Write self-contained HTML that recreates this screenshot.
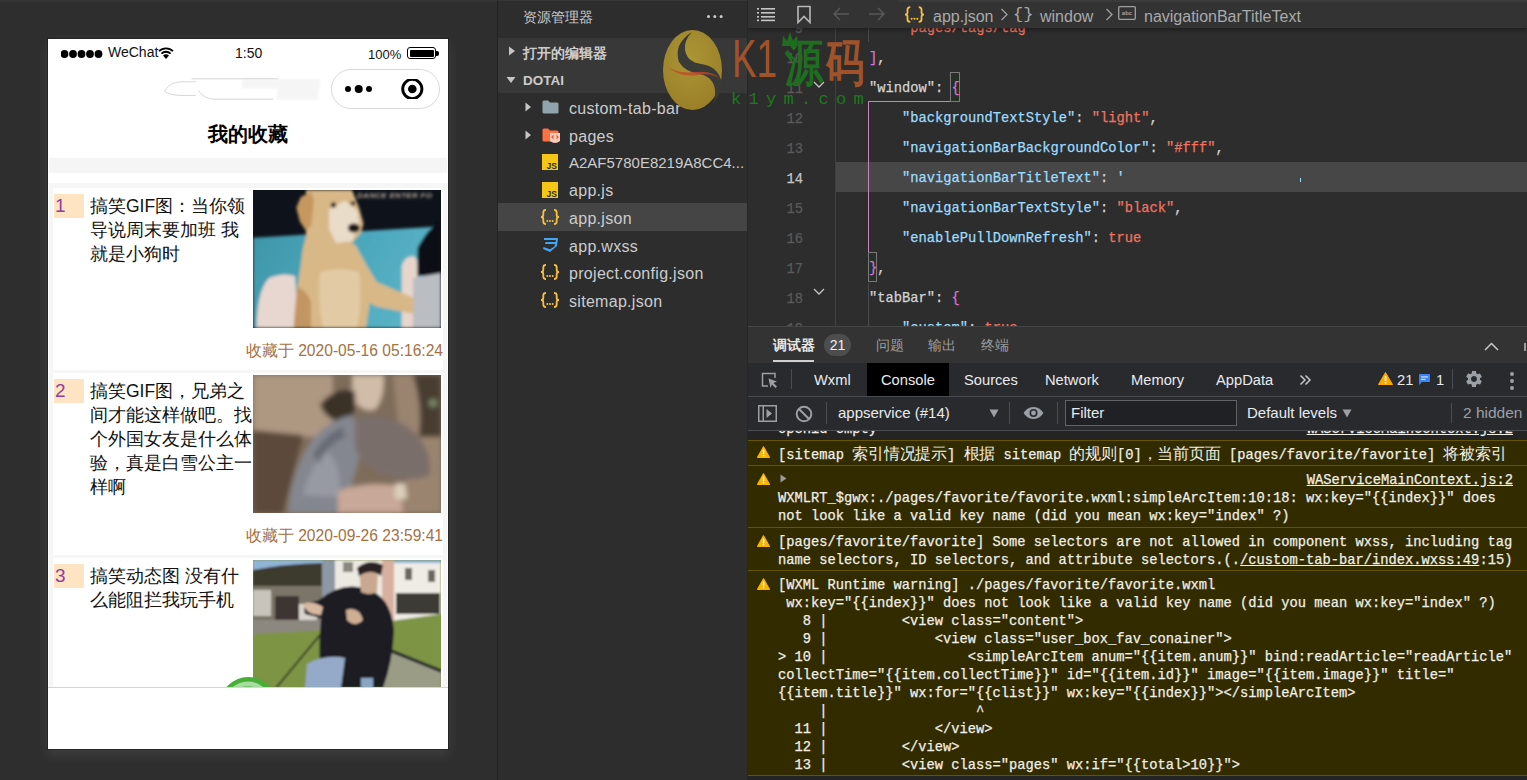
<!DOCTYPE html>
<html><head><meta charset="utf-8">
<style>
*{margin:0;padding:0;box-sizing:border-box}
html,body{width:1527px;height:780px;overflow:hidden;background:#2e2e2e;font-family:"Liberation Sans",sans-serif}
.a{position:absolute}
.nw{white-space:nowrap}
.pre{white-space:pre}
/* simulator */
#sim{left:0;top:0;width:497px;height:780px;background:#2e2e2e}
#phone{left:48px;top:39px;width:400px;height:710px;background:#fff;overflow:hidden;box-shadow:0 0 0 1px rgba(20,20,20,.5),0 5px 12px 1px rgba(255,255,255,.085)}
/* sidebar */
#side{left:497px;top:0;width:251px;height:780px;background:#2d2d2d;border-left:1px solid #222}
/* editor */
#ed{left:748px;top:0;width:779px;height:326px;background:#2d2d2d;overflow:hidden}
#panel{left:748px;top:326px;width:779px;height:454px;background:#242424}
.bm{}
.ct{font-size:13.75px;line-height:18px;color:#efefe8;-webkit-text-stroke-width:0.3px}
.cj{font-size:16px;letter-spacing:-0.2px;-webkit-text-stroke-width:0}
.mono{-webkit-text-stroke-width:0.25px;font-family:"Liberation Mono",monospace}
</style></head><body>
<div id="sim" class="a">
  <div class="a" style="left:0;top:0;width:497px;height:2px;background:#353535"></div>
</div>
<div id="phone" class="a">
  <!-- status bar -->
  <svg class="a" style="left:12px;top:10px" width="48" height="10" viewBox="0 0 48 10">
    <circle cx="4.5" cy="5" r="3.9" fill="#000"/><circle cx="13" cy="5" r="3.9" fill="#000"/><circle cx="21.5" cy="5" r="3.9" fill="#000"/><circle cx="30" cy="5" r="3.9" fill="#000"/><circle cx="38.5" cy="5" r="3.9" fill="#000"/>
    <rect x="0" y="0" width="1" height="10" fill="#fff"/>
  </svg>
  <div class="a nw" id="wechat" style="left:60px;top:6px;font-size:14px;line-height:14px;color:#111">WeChat</div>
  <svg class="a" style="left:110px;top:8px" width="16" height="12" viewBox="0 0 16 12">
    <path d="M1 4.2 A10 10 0 0 1 15 4.2" stroke="#000" stroke-width="1.8" fill="none"/>
    <path d="M3.4 6.6 A6.6 6.6 0 0 1 12.6 6.6" stroke="#000" stroke-width="1.8" fill="none"/>
    <path d="M8 12 L5 8.6 A4.2 4.2 0 0 1 11 8.6 Z" fill="#000"/>
  </svg>
  <div class="a nw" id="time" style="left:187px;top:7px;font-size:14px;line-height:14px;color:#111">1:50</div>
  <div class="a nw" id="pct" style="left:320px;top:9px;font-size:13px;line-height:13px;color:#111">100%</div>
  <div class="a" style="left:359px;top:8px;width:29px;height:12px;border:1.3px solid #000;border-radius:3px;padding:1.5px">
    <div style="width:100%;height:100%;background:#000;border-radius:1px"></div>
  </div>
  <div class="a" style="left:388px;top:12px;width:3px;height:5px;background:#000;border-radius:0 2px 2px 0"></div>
  <!-- erased title smudge -->
  <svg class="a" style="left:110px;top:36px" width="170" height="30" viewBox="0 0 170 30">
    <defs><filter id="sb"><feGaussianBlur stdDeviation="0.8"/></filter></defs>
    <g filter="url(#sb)">
    <rect x="84" y="4" width="78" height="9.5" fill="#f5f5f5"/>
    <rect x="119" y="12" width="41" height="13" fill="#f5f5f5"/>
    </g>
    <path d="M6.4 16.2 Q12 6.8 23 6.8 L38 6.8 M6.4 16.2 Q12 20.4 23 20.4 L38 20.4" fill="none" stroke="#d6d6d6" stroke-width="1"/>
    <path d="M33.6 3.8 L120 3.8 M40.6 15.6 Q46 24.2 57 24.2 L115 24.2" fill="none" stroke="#d6d6d6" stroke-width="1"/>
  </svg>
  <!-- capsule -->
  <div class="a" style="left:283px;top:30px;width:109px;height:40px;border:1px solid #d9d9d9;border-radius:20px;background:#fff"></div>
  <svg class="a" style="left:290px;top:40px" width="100" height="20" viewBox="0 0 100 20">
    <circle cx="10" cy="10" r="3" fill="#000"/><circle cx="20.7" cy="10" r="4" fill="#000"/><circle cx="31" cy="10" r="3" fill="#000"/>
    <circle cx="74.3" cy="10" r="9.6" fill="none" stroke="#000" stroke-width="2.9"/><circle cx="74.3" cy="10" r="4.3" fill="#000"/>
  </svg>
  <div class="a nw" id="title" style="left:0;top:85px;width:400px;text-align:center;font-size:20px;line-height:20px;font-weight:bold;color:#000">我的收藏</div>
  <!-- gray band -->
  <div class="a" style="left:1px;top:119px;width:398px;height:15px;background:#f5f5f5"></div>
  <!-- list -->
  <div class="a" style="left:1px;top:144px;width:398px;height:504px;background:#f6f6f6"></div>
  
  <div class="a" style="left:5px;top:149px;width:390px;height:182px;background:#fff;overflow:hidden">
    <div class="a" style="left:1px;top:6px;width:30px;height:24px;background:#ffe4c4;color:#923c9e;font-size:19px;line-height:24px;padding-left:1px">1</div>
    <div class="a" style="left:37px;top:6px;width:162.2px;font-size:17.5px;line-height:24px;color:#111">搞笑GIF图：当你领导说周末要加班 我就是小狗时</div>
    <div class="a" style="left:200px;top:2px;width:188px;height:138px;overflow:hidden"><svg width="188" height="138" viewBox="0 0 188 138">
<defs><filter id="b1" x="-5%" y="-5%" width="110%" height="110%"><feGaussianBlur stdDeviation="1.7"/></filter>
<linearGradient id="tl" x1="0" y1="0" x2="1" y2="0.3"><stop offset="0" stop-color="#3f95a8"/><stop offset="0.6" stop-color="#4ca8bc"/><stop offset="1" stop-color="#5ab2c6"/></linearGradient></defs>
<rect width="188" height="138" fill="#0e121a"/>
<g filter="url(#b1)">
<path d="M0 47.8 L177 37 L188 36 L188 138 L0 138 Z" fill="url(#tl)"/>
<text x="104" y="8" font-family="Liberation Sans" font-size="8" font-weight="bold" fill="#b8ac9c" font-style="italic" letter-spacing="0.3">DANCE  ENTER    FO</text>
<path d="M3.5 138 Q4 100 16 88 Q30 82 42 86 L46 138Z" fill="#e8d6d0"/>
<path d="M148.6 138 L148.6 76 Q152 66 160 66 Q164.5 68 164.5 76 L164.5 138Z" fill="#e8d5cc"/>
<path d="M164.5 58 Q176 36 188 32 L188 85 L164.5 86Z" fill="#090c14"/>
<path d="M160 88 L188 83 L188 138 L160 138Z" fill="#babdc2"/>
<path d="M53 0 L99 0 L106 17.7 L110.5 33.6 L108 42.4 L99 53 Q104 56 104.4 58.4 L113 74.3 L123.8 92 L161 108 L160 123.8 L123.8 116.7 L116.7 113 L113 138 L40.7 138 L41.6 123.8 L44.2 99 L47.8 74.3 L49.5 60 L53 46Z" fill="#d8b887"/>
<path d="M43.3 17.7 L47.8 7.1 L58.4 1.8 L61 10.6 L58.4 35.4 L53 40.7 L46.9 31.8Z" fill="#c69860"/>
<path d="M76 19.5 L92 10.6 L104.4 21 L106 33.6 L99 51.3 L83 53 L76 39Z" fill="#e9dcc8"/>
<path d="M67 82 Q88 76 106 82 Q110 112 104 138 L70 138 Q64 110 67 82Z" fill="#e2caa4"/>
<path d="M40.7 138 L44 97 Q54 100 58 112 L58 138Z" fill="#c29662"/>
<ellipse cx="100.8" cy="38" rx="6" ry="4.5" fill="#1a1512"/>
<circle cx="80.5" cy="15" r="2.7" fill="#2a2018"/><circle cx="100" cy="13.3" r="2.4" fill="#2a2018"/>
</g>
</svg></div>
    <div class="a nw" style="right:0;top:155px;font-size:15.6px;line-height:16px;color:#a5713f">收藏于 2020-05-16 05:16:24</div>
  </div>
  <div class="a" style="left:5px;top:334px;width:390px;height:182px;background:#fff;overflow:hidden">
    <div class="a" style="left:1px;top:6px;width:30px;height:24px;background:#ffe4c4;color:#923c9e;font-size:19px;line-height:24px;padding-left:1px">2</div>
    <div class="a" style="left:37px;top:6px;width:162.2px;font-size:17.5px;line-height:24px;color:#111">搞笑GIF图，兄弟之间才能这样做吧。找个外国女友是什么体验，真是白雪公主一样啊</div>
    <div class="a" style="left:200px;top:2px;width:188px;height:138px;overflow:hidden"><svg width="188" height="138" viewBox="0 0 188 138">
<defs><filter id="b3" x="-5%" y="-5%" width="110%" height="110%"><feGaussianBlur stdDeviation="2.8"/></filter></defs>
<rect width="188" height="138" fill="#7e6c5a"/>
<g filter="url(#b3)">
<rect x="0" y="0" width="80" height="62" fill="#ae9882"/>
<path d="M0 55 L50 60 Q40 100 30 138 L0 138Z" fill="#5c4a3a"/>
<path d="M140 0 L188 0 L188 138 L150 138 Q158 90 145 50Z" fill="#9a8470"/>
<path d="M160 0 L188 0 L188 62 L166 62 Q170 30 160 0Z" fill="#4a3e32"/>
<circle cx="180" cy="28" r="4" fill="#7a8a68"/>
<path d="M99 0 L131 0 Q132 25 122 35 Q105 38 99 20Z" fill="#d0bca8"/>
<path d="M67 30 Q80 12 102 16 Q104 36 96 46 Q76 50 67 30Z" fill="#3a3028"/>
<path d="M35 138 Q38 96 58 66 Q76 44 99 40 Q112 60 104 92 Q96 120 92 138Z" fill="#84878f"/>
<path d="M50 120 Q56 92 74 76 Q90 92 86 122Z" fill="#979aa2"/>
<path d="M60 80 Q70 60 90 52 L92 62 Q74 70 66 88Z" fill="#686c76"/>
<path d="M102 42 Q132 36 158 54 Q180 74 177 100 Q160 108 130 100 Q106 90 102 70Z" fill="#7a6e6a"/>
<path d="M85 116 Q118 104 150 112 L150 138 L85 138Z" fill="#c8a898"/>
<path d="M142 108 L152 108 L154 124 L142 124Z" fill="#dcd0bc"/>
</g>
</svg></div>
    <div class="a nw" style="right:0;top:155px;font-size:15.6px;line-height:16px;color:#a5713f">收藏于 2020-09-26 23:59:41</div>
  </div>
  <div class="a" style="left:5px;top:519px;width:390px;height:140px;background:#fff;overflow:hidden">
    <div class="a" style="left:1px;top:6px;width:30px;height:24px;background:#ffe4c4;color:#923c9e;font-size:19px;line-height:24px;padding-left:1px">3</div>
    <div class="a" style="left:37px;top:6px;width:162.2px;font-size:17.5px;line-height:24px;color:#111">搞笑动态图 没有什么能阻拦我玩手机</div>
    <div class="a" style="left:200px;top:2px;width:188px;height:138px;overflow:hidden"><svg width="188" height="138" viewBox="0 0 188 138">
<defs><filter id="b4" x="-5%" y="-5%" width="110%" height="110%"><feGaussianBlur stdDeviation="1.2"/></filter></defs>
<rect width="188" height="138" fill="#7e9446"/>
<g filter="url(#b4)">
<rect x="0" y="0" width="188" height="12" fill="#90b4d8"/>
<path d="M0 10 Q30 4 70 3 L70 32 L0 32Z" fill="#3c3a2e"/>
<rect x="0" y="26" width="70" height="36" fill="#7a7468"/>
<rect x="0" y="30" width="18" height="26" fill="#c8c4bc"/>
<rect x="22" y="36" width="24" height="26" fill="#3c3632"/>
<rect x="46" y="44" width="18" height="16" fill="#d8d4cc"/>
<rect x="69" y="0" width="14" height="44" fill="#8c98a4"/>
<rect x="82" y="0" width="48" height="42" fill="#ece8e2"/>
<rect x="90" y="2" width="10" height="10" fill="#8a8680"/>
<rect x="129" y="0" width="12" height="62" fill="#d8b0a0"/>
<rect x="141" y="3" width="47" height="61" fill="#efebe5"/>
<rect x="143" y="33" width="44" height="21" fill="#3e3a36"/>
<rect x="152" y="8" width="7" height="12" fill="#6a6660"/><rect x="175" y="10" width="7" height="12" fill="#6a6660"/>
<rect x="0" y="60" width="70" height="14" fill="#8c8880"/>
<path d="M0 74 L70 70 L131 62 L188 54 L188 138 L0 138Z" fill="#7d9444"/>
<path d="M23 128 L67 75" stroke="#2e2a22" stroke-width="1.8"/>
<path d="M131 88 L188 111 L188 138 L125 138Z" fill="#9a9c86"/>
<path d="M131 88 L188 111" stroke="#22222a" stroke-width="3"/>
<path d="M66 40 Q88 22 110 28 Q138 34 141 70 Q140 100 130 128 L70 128 Q64 96 68 58 L52 54 Q49 46 56 43Z" fill="#1a1a20"/>
<path d="M50 44 Q58 40 70 47 L68 55 Q54 56 50 44Z" fill="#d8b8a0"/>
<path d="M93 50 Q106 46 110 60 Q102 68 94 60Z" fill="#cfae94"/>
<path d="M106 10 Q116 3 125 10 L124 32 Q116 36 108 32Z" fill="#c8a890"/>
<path d="M104 8 Q116 -2 130 5 L128 16 Q118 8 106 16Z" fill="#2a2420"/>
<path d="M54 104 Q72 94 92 98 L88 128 L52 128Z" fill="#94aac8"/>
<rect x="108" y="118" width="12" height="10" fill="#8aa4c4"/>
</g>
</svg></div>
    <div class="a nw" style="right:0;top:155px;font-size:15.6px;line-height:16px;color:#a5713f"></div>
  </div>
  <!-- tabbar -->
  <div class="a" style="left:0;top:648px;width:400px;height:62px;background:#fff;border-top:1px solid #d6d6d6"></div>
  <svg class="a" style="left:170px;top:630px" width="60" height="18" viewBox="0 0 60 18">
    <circle cx="30" cy="36" r="28" fill="#45b035"/>
    <circle cx="30" cy="36" r="23.5" fill="#a8dba0"/>
    <circle cx="30" cy="36" r="19" fill="#6cc561"/>
  </svg>
</div>
<div id="side" class="a">
  <div class="a" style="left:0;top:0;width:250px;height:1px;background:#363636"></div>
  <div class="a nw" style="left:25px;top:10px;font-size:14px;line-height:14px;color:#cccccc">资源管理器</div>
  <div class="a" style="left:209px;top:15px;width:3px;height:3px;border-radius:50%;background:#ccc;box-shadow:6.3px 0 0 #ccc,12.6px 0 0 #ccc"></div>
  <div class="a" style="left:0;top:38px;width:250px;height:55px;background:#383838"></div>
  <svg class="a" style="left:10px;top:46px" width="8" height="10" viewBox="0 0 8 10"><path d="M1 0.5 L7 5 L1 9.5Z" fill="#c5c5c5"/></svg>
  <div class="a nw" style="left:25px;top:47px;font-size:13.5px;line-height:14px;font-weight:bold;color:#cccccc">打开的编辑器</div>
  <svg class="a" style="left:8px;top:76px" width="10" height="8" viewBox="0 0 10 8"><path d="M0.5 1 L9.5 1 L5 7Z" fill="#c5c5c5"/></svg>
  <div class="a nw" style="left:25px;top:74px;font-size:13.5px;line-height:14px;font-weight:bold;color:#cccccc">DOTAI</div>
  <div class="a" style="left:0;top:203px;width:250px;height:28px;background:#454545"></div>
  <svg class="a" style="left:27px;top:102px" width="7" height="10" viewBox="0 0 7 10"><path d="M0.5 0.5 L6 5 L0.5 9.5Z" fill="#c5c5c5"/></svg><svg class="a" style="left:44px;top:100px" width="17" height="14" viewBox="0 0 17 14"><path d="M0.5 2 Q0.5 0.5 2 0.5 L6 0.5 L8 2.5 L15 2.5 Q16.5 2.5 16.5 4 L16.5 12.5 Q16.5 13.5 15 13.5 L2 13.5 Q0.5 13.5 0.5 12Z" fill="#90a4ae"/></svg><div class="a nw" style="left:71px;top:99.5px;font-size:16px;line-height:18px;letter-spacing:0.3px;color:#cccccc">custom-tab-bar</div><svg class="a" style="left:27px;top:130px" width="7" height="10" viewBox="0 0 7 10"><path d="M0.5 0.5 L6 5 L0.5 9.5Z" fill="#c5c5c5"/></svg><svg class="a" style="left:44px;top:128px" width="19" height="17" viewBox="0 0 19 17"><path d="M0.5 2 Q0.5 0.5 2 0.5 L6 0.5 L8 2.5 L15 2.5 Q16.5 2.5 16.5 4 L16.5 12.5 Q16.5 13.5 15 13.5 L2 13.5 Q0.5 13.5 0.5 12Z" fill="#ff7043"/><path d="M8 5 L18 5 L18 13 Q13 17 8 13Z" fill="#ffccbc"/><path d="M11.5 7.5 L10 9 L11.5 10.5 M14.5 7.5 L16 9 L14.5 10.5" stroke="#f4511e" stroke-width="1.2" fill="none"/></svg><div class="a nw" style="left:71px;top:127.5px;font-size:16px;line-height:18px;letter-spacing:0.3px;color:#cccccc">pages</div><svg class="a" style="left:44px;top:154px" width="16" height="16" viewBox="0 0 16 16"><rect width="16" height="16" fill="#f5c518"/><text x="15" y="14.5" text-anchor="end" font-family="Liberation Sans" font-size="8.5" font-weight="bold" fill="#2d2d2d">JS</text></svg><div class="a nw" style="left:71px;top:153.5px;font-size:15px;line-height:18px;color:#cccccc">A2AF5780E8219A8CC4...</div><svg class="a" style="left:44px;top:181.5px" width="16" height="16" viewBox="0 0 16 16"><rect width="16" height="16" fill="#f5c518"/><text x="15" y="14.5" text-anchor="end" font-family="Liberation Sans" font-size="8.5" font-weight="bold" fill="#2d2d2d">JS</text></svg><div class="a nw" style="left:71px;top:182.0px;font-size:16px;line-height:18px;letter-spacing:0.3px;color:#cccccc">app.js</div><svg class="a" style="left:42px;top:209px" width="20" height="16" viewBox="0 0 20 16"><path d="M6 0.9 Q3.3 0.9 3.3 3.4 L3.3 6 Q3.3 8 1 8 Q3.3 8 3.3 10 L3.3 12.6 Q3.3 15.1 6 15.1 M14 0.9 Q16.7 0.9 16.7 3.4 L16.7 6 Q16.7 8 19 8 Q16.7 8 16.7 10 L16.7 12.6 Q16.7 15.1 14 15.1" fill="none" stroke="#f9c23c" stroke-width="1.8"/><circle cx="7.3" cy="12" r="1" fill="#f9c23c"/><circle cx="10" cy="12" r="1" fill="#f9c23c"/><circle cx="12.7" cy="12" r="1" fill="#f9c23c"/></svg><div class="a nw" style="left:71px;top:209.5px;font-size:16px;line-height:18px;letter-spacing:0.3px;color:#cccccc">app.json</div><svg class="a" style="left:44px;top:237px" width="17" height="16" viewBox="0 0 17 16"><path d="M2 1 L16 1 L15 9 L8 15 L1 12 L1.6 10 L8 12.2 L12.5 9.5 L13 7 L3 7 L3.5 5 L13.5 5 L14 3 L2 3Z" fill="#42a5f5"/></svg><div class="a nw" style="left:71px;top:237.5px;font-size:16px;line-height:18px;letter-spacing:0.3px;color:#cccccc">app.wxss</div><svg class="a" style="left:42px;top:264px" width="20" height="16" viewBox="0 0 20 16"><path d="M6 0.9 Q3.3 0.9 3.3 3.4 L3.3 6 Q3.3 8 1 8 Q3.3 8 3.3 10 L3.3 12.6 Q3.3 15.1 6 15.1 M14 0.9 Q16.7 0.9 16.7 3.4 L16.7 6 Q16.7 8 19 8 Q16.7 8 16.7 10 L16.7 12.6 Q16.7 15.1 14 15.1" fill="none" stroke="#f9c23c" stroke-width="1.8"/><circle cx="7.3" cy="12" r="1" fill="#f9c23c"/><circle cx="10" cy="12" r="1" fill="#f9c23c"/><circle cx="12.7" cy="12" r="1" fill="#f9c23c"/></svg><div class="a nw" style="left:71px;top:264.5px;font-size:16px;line-height:18px;letter-spacing:0.3px;color:#cccccc">project.config.json</div><svg class="a" style="left:42px;top:292px" width="20" height="16" viewBox="0 0 20 16"><path d="M6 0.9 Q3.3 0.9 3.3 3.4 L3.3 6 Q3.3 8 1 8 Q3.3 8 3.3 10 L3.3 12.6 Q3.3 15.1 6 15.1 M14 0.9 Q16.7 0.9 16.7 3.4 L16.7 6 Q16.7 8 19 8 Q16.7 8 16.7 10 L16.7 12.6 Q16.7 15.1 14 15.1" fill="none" stroke="#f9c23c" stroke-width="1.8"/><circle cx="7.3" cy="12" r="1" fill="#f9c23c"/><circle cx="10" cy="12" r="1" fill="#f9c23c"/><circle cx="12.7" cy="12" r="1" fill="#f9c23c"/></svg><div class="a nw" style="left:71px;top:292.5px;font-size:16px;line-height:18px;letter-spacing:0.3px;color:#cccccc">sitemap.json</div>
</div>
<div id="ed" class="a">
  <div class="a" style="left:87px;top:162px;width:692px;height:30px;background:#474747"></div>
  <div class="a" style="left:87px;top:0;width:1px;height:326px;background:#404040"></div>
  <div class="a" style="left:120px;top:12px;width:1px;height:30px;background:#4a4a4a"></div>
  <div class="a" style="left:120px;top:283px;width:1px;height:43px;background:#4a4a4a"></div>
  <div class="a" style="left:120px;top:101px;width:83px;height:1px;background:#c586c0"></div>
  <div class="a" style="left:120px;top:101px;width:1px;height:151px;background:#c586c0"></div>
  <div class="a" style="left:202px;top:72px;width:10px;height:30px;border:1px solid #7a7a7a;background:#263026"></div><div class="a" style="left:120px;top:252px;width:9px;height:30px;border:1px solid #7a7a7a;background:#263026"></div><div class="a pre mono" style="left:121px;top:20px;font-size:13.75px;line-height:18px">    <span style="color:#f0735f">"pages/tags/tag"</span></div><div class="a pre mono" style="left:121px;top:50px;font-size:13.75px;line-height:18px"><span style="color:#da70d6">]</span><span style="color:#d4d4d4">,</span></div><div class="a pre mono" style="left:121px;top:80px;font-size:13.75px;line-height:18px"><span style="color:#d4d4d4">"window"</span><span style="color:#d4d4d4">: </span><span class="bm"><span style="color:#da70d6">{</span></span></div><div class="a pre mono" style="left:121px;top:110px;font-size:13.75px;line-height:18px">    <span style="color:#9cdcfe">"backgroundTextStyle"</span><span style="color:#d4d4d4">: </span><span style="color:#f0735f">"light"</span><span style="color:#d4d4d4">,</span></div><div class="a pre mono" style="left:121px;top:140px;font-size:13.75px;line-height:18px">    <span style="color:#9cdcfe">"navigationBarBackgroundColor"</span><span style="color:#d4d4d4">: </span><span style="color:#f0735f">"#fff"</span><span style="color:#d4d4d4">,</span></div><div class="a pre mono" style="left:121px;top:170px;font-size:13.75px;line-height:18px">    <span style="color:#9cdcfe">"navigationBarTitleText"</span><span style="color:#d4d4d4">: </span><span style="color:#9cdcfe">'</span></div><div class="a pre mono" style="left:121px;top:200px;font-size:13.75px;line-height:18px">    <span style="color:#9cdcfe">"navigationBarTextStyle"</span><span style="color:#d4d4d4">: </span><span style="color:#f0735f">"black"</span><span style="color:#d4d4d4">,</span></div><div class="a pre mono" style="left:121px;top:230px;font-size:13.75px;line-height:18px">    <span style="color:#9cdcfe">"enablePullDownRefresh"</span><span style="color:#d4d4d4">: </span><span style="color:#f0735f">true</span></div><div class="a pre mono" style="left:121px;top:260px;font-size:13.75px;line-height:18px"><span class="bm"><span style="color:#da70d6">}</span></span><span style="color:#d4d4d4">,</span></div><div class="a pre mono" style="left:121px;top:290px;font-size:13.75px;line-height:18px"><span style="color:#d4d4d4">"tabBar"</span><span style="color:#d4d4d4">: </span><span style="color:#da70d6">{</span></div><div class="a pre mono" style="left:121px;top:320px;font-size:13.75px;line-height:18px">    <span style="color:#9cdcfe">"custom"</span><span style="color:#d4d4d4">: </span><span style="color:#f0735f">true</span><span style="color:#d4d4d4">,</span></div>
  <div class="a nw mono" style="left:25px;width:30px;text-align:right;top:21px;font-size:13.75px;line-height:18px;color:#5a5a5a">9</div><div class="a nw mono" style="left:25px;width:30px;text-align:right;top:51px;font-size:13.75px;line-height:18px;color:#5a5a5a">10</div><div class="a nw mono" style="left:25px;width:30px;text-align:right;top:81px;font-size:13.75px;line-height:18px;color:#5a5a5a">11</div><div class="a nw mono" style="left:25px;width:30px;text-align:right;top:111px;font-size:13.75px;line-height:18px;color:#5a5a5a">12</div><div class="a nw mono" style="left:25px;width:30px;text-align:right;top:141px;font-size:13.75px;line-height:18px;color:#5a5a5a">13</div><div class="a nw mono" style="left:25px;width:30px;text-align:right;top:171px;font-size:13.75px;line-height:18px;color:#c6c6c6">14</div><div class="a nw mono" style="left:25px;width:30px;text-align:right;top:201px;font-size:13.75px;line-height:18px;color:#5a5a5a">15</div><div class="a nw mono" style="left:25px;width:30px;text-align:right;top:231px;font-size:13.75px;line-height:18px;color:#5a5a5a">16</div><div class="a nw mono" style="left:25px;width:30px;text-align:right;top:261px;font-size:13.75px;line-height:18px;color:#5a5a5a">17</div><div class="a nw mono" style="left:25px;width:30px;text-align:right;top:291px;font-size:13.75px;line-height:18px;color:#5a5a5a">18</div><div class="a nw mono" style="left:25px;width:30px;text-align:right;top:321px;font-size:13.75px;line-height:18px;color:#5a5a5a">19</div><svg class="a" style="left:65px;top:81px" width="12" height="8" viewBox="0 0 12 8"><path d="M1 1 L6 6 L11 1" fill="none" stroke="#c5c5c5" stroke-width="1.3"/></svg><svg class="a" style="left:65px;top:288px" width="12" height="8" viewBox="0 0 12 8"><path d="M1 1 L6 6 L11 1" fill="none" stroke="#c5c5c5" stroke-width="1.3"/></svg><div class="a" style="left:552px;top:178px;width:1px;height:4px;background:#9cdcfe"></div>
  <!-- breadcrumb -->
  <div class="a" style="left:0;top:0;width:779px;height:28px;background:#333333;box-shadow:0 2px 4px rgba(0,0,0,.35)"></div>
  <div class="a" style="left:150px;top:0;width:629px;height:2px;background:#3a3a3a"></div>
  <svg class="a" style="left:8px;top:6px" width="22" height="16" viewBox="0 0 22 16">
    <g fill="#c5c5c5"><rect x="1" y="2" width="2" height="1.6"/><rect x="1" y="6" width="2" height="1.6"/><rect x="1" y="10" width="2" height="1.6"/><rect x="1" y="13.6" width="2" height="1.6"/>
    <rect x="5" y="2" width="14" height="1.6"/><rect x="5" y="6" width="14" height="1.6"/><rect x="5" y="10" width="14" height="1.6"/><rect x="5" y="13.6" width="14" height="1.6"/></g>
  </svg>
  <svg class="a" style="left:48px;top:5px" width="16" height="19" viewBox="0 0 16 19"><path d="M2 1.5 L14 1.5 L14 17.5 L8 11.5 L2 17.5Z" fill="none" stroke="#b8b8b8" stroke-width="1.6" stroke-linejoin="miter"/></svg>
  <svg class="a" style="left:84px;top:6px" width="18" height="16" viewBox="0 0 18 16"><path d="M17 8 L2 8 M8 2 L2 8 L8 14" fill="none" stroke="#5a5a5a" stroke-width="1.4"/></svg>
  <svg class="a" style="left:120px;top:6px" width="18" height="16" viewBox="0 0 18 16"><path d="M1 8 L16 8 M10 2 L16 8 L10 14" fill="none" stroke="#5a5a5a" stroke-width="1.4"/></svg>
  <svg class="a" style="left:156px;top:6px" width="21" height="17" viewBox="0 0 20 16"><path d="M6 0.9 Q3.3 0.9 3.3 3.4 L3.3 6 Q3.3 8 1 8 Q3.3 8 3.3 10 L3.3 12.6 Q3.3 15.1 6 15.1 M14 0.9 Q16.7 0.9 16.7 3.4 L16.7 6 Q16.7 8 19 8 Q16.7 8 16.7 10 L16.7 12.6 Q16.7 15.1 14 15.1" fill="none" stroke="#f9c23c" stroke-width="1.7"/><circle cx="7.3" cy="12" r="1" fill="#f9c23c"/><circle cx="10" cy="12" r="1" fill="#f9c23c"/><circle cx="12.7" cy="12" r="1" fill="#f9c23c"/></svg>
  <div class="a nw" style="left:185px;top:8px;font-size:16px;line-height:18px;color:#a9a9a9">app.json</div>
  <svg class="a" style="left:252px;top:8px" width="9" height="13" viewBox="0 0 9 13"><path d="M1.5 1 L7 6.5 L1.5 12" fill="none" stroke="#a0a0a0" stroke-width="1.3"/></svg>
  <div class="a nw" style="left:265px;top:6px;font-size:17px;line-height:18px;color:#a9a9a9;font-family:'Liberation Mono'">{}</div>
  <div class="a nw" style="left:292px;top:8px;font-size:16px;line-height:18px;color:#a9a9a9">window</div>
  <svg class="a" style="left:357px;top:8px" width="9" height="13" viewBox="0 0 9 13"><path d="M1.5 1 L7 6.5 L1.5 12" fill="none" stroke="#a0a0a0" stroke-width="1.3"/></svg>
  <svg class="a" style="left:370px;top:6px" width="18" height="14" viewBox="0 0 18 14"><rect x="0.7" y="0.7" width="16.6" height="12.6" rx="1" fill="none" stroke="#a0a0a0" stroke-width="1.3"/><text x="9" y="9" text-anchor="middle" font-family="Liberation Sans" font-size="6" font-weight="bold" fill="#a0a0a0">abc</text></svg>
  <div class="a nw" style="left:396px;top:8px;font-size:16px;line-height:18px;color:#a9a9a9">navigationBarTitleText</div>
</div>
<div id="panel" class="a">
  <div class="a" style="left:0;top:0;width:779px;height:1px;background:#454545"></div>
  <div class="a" style="left:0;top:1px;width:779px;height:36px;background:#333333"></div>
  <div class="a nw" style="left:25px;top:12px;font-size:14px;line-height:14px;color:#e6e6e6;font-weight:bold">调试器</div>
  <div class="a" style="left:25px;top:34px;width:41px;height:2px;background:#d0d0d0"></div>
  <div class="a" style="left:76px;top:8px;width:27px;height:22px;border-radius:11px;background:#4d4d4d;color:#f0f0f0;font-size:14px;line-height:22px;text-align:center">21</div>
  <div class="a nw" style="left:128px;top:12px;font-size:14px;line-height:14px;color:#9d9d9d">问题</div>
  <div class="a nw" style="left:180px;top:12px;font-size:14px;line-height:14px;color:#9d9d9d">输出</div>
  <div class="a nw" style="left:233px;top:12px;font-size:14px;line-height:14px;color:#9d9d9d">终端</div>
  <svg class="a" style="left:736px;top:16px" width="15" height="9" viewBox="0 0 15 9"><path d="M1 8 L7.5 1.5 L14 8" fill="none" stroke="#c8c8c8" stroke-width="1.5"/></svg>
  <div class="a" style="left:776px;top:17px;width:2px;height:8px;background:#9a9a9a"></div>
  <!-- devtools toolbar -->
  <div class="a" style="left:0;top:37px;width:779px;height:33px;background:#292a2d"></div>
  <div class="a" style="left:119px;top:37px;width:82px;height:33px;background:#000"></div>
  <svg class="a" style="left:13px;top:46px" width="17" height="16" viewBox="0 0 17 16"><path d="M7 14 L1.5 14 L1.5 1.5 L14 1.5 L14 6" fill="none" stroke="#9aa0a6" stroke-width="1.5"/><path d="M7.5 6.5 L16 9.5 L12.5 11 L16 14.5 L14.5 16 L11 12.5 L9.5 16Z" fill="#9aa0a6"/></svg>
  <div class="a" style="left:43px;top:43px;width:1px;height:20px;background:#494c50"></div>
  <div class="a nw" style="left:66px;top:46px;font-size:14.7px;line-height:16px;color:#e8eaed">Wxml</div>
  <div class="a nw" style="left:133px;top:46px;font-size:14.7px;line-height:16px;color:#e8eaed">Console</div>
  <div class="a nw" style="left:216px;top:46px;font-size:14.7px;line-height:16px;color:#e8eaed">Sources</div>
  <div class="a nw" style="left:297px;top:46px;font-size:14.7px;line-height:16px;color:#e8eaed">Network</div>
  <div class="a nw" style="left:383px;top:46px;font-size:14.7px;line-height:16px;color:#e8eaed">Memory</div>
  <div class="a nw" style="left:468px;top:46px;font-size:14.7px;line-height:16px;color:#e8eaed">AppData</div>
  <svg class="a" style="left:551px;top:48px" width="13" height="12" viewBox="0 0 13 12"><path d="M1.5 1.5 L6 6 L1.5 10.5 M6.5 1.5 L11 6 L6.5 10.5" fill="none" stroke="#c4c7c5" stroke-width="1.5"/></svg>
  <svg class="a" style="left:630px;top:46px" width="15" height="13" viewBox="0 0 15 13"><path d="M7.5 0.5 L14.5 12.5 L0.5 12.5Z" fill="#f9ab00" stroke="#f9ab00" stroke-linejoin="round"/><rect x="6.8" y="4" width="1.5" height="5" fill="#fff"/><rect x="6.8" y="10" width="1.5" height="1.5" fill="#fff"/></svg>
  <div class="a nw" style="left:649px;top:46px;font-size:14.7px;line-height:16px;color:#e8eaed">21</div>
  <svg class="a" style="left:670px;top:47px" width="13" height="12" viewBox="0 0 13 12"><path d="M1 1 L12 1 L12 9 L4 9 L1 12Z" fill="#3b82f6"/><rect x="3" y="3.3" width="7" height="1.2" fill="#cfe0ff"/><rect x="3" y="5.8" width="4.5" height="1.2" fill="#cfe0ff"/></svg>
  <div class="a nw" style="left:688px;top:46px;font-size:14.7px;line-height:16px;color:#e8eaed">1</div>
  <div class="a" style="left:704px;top:43px;width:1px;height:20px;background:#494c50"></div>
  <svg class="a" style="left:716px;top:43px" width="20" height="20" viewBox="0 0 24 24"><path fill="#9aa0a6" d="M19.14 12.94c.04-.3.06-.61.06-.94 0-.32-.02-.64-.07-.94l2.03-1.58a.49.49 0 0 0 .12-.61l-1.92-3.32a.488.488 0 0 0-.59-.22l-2.39.96c-.5-.38-1.03-.7-1.62-.94l-.36-2.54a.484.484 0 0 0-.48-.41h-3.84c-.24 0-.43.17-.47.41l-.36 2.54c-.59.24-1.13.57-1.62.94l-2.39-.96c-.22-.08-.47 0-.59.22L2.74 8.87c-.12.21-.08.47.12.61l2.03 1.58c-.05.3-.09.63-.09.94s.02.64.07.94l-2.03 1.58a.49.49 0 0 0-.12.61l1.92 3.32c.12.22.37.29.59.22l2.39-.96c.5.38 1.03.7 1.62.94l.36 2.54c.05.24.24.41.48.41h3.84c.24 0 .44-.17.47-.41l.36-2.54c.59-.24 1.13-.56 1.62-.94l2.39.96c.22.08.47 0 .59-.22l1.92-3.32c.12-.22.07-.47-.12-.61l-2.01-1.58zM12 15.6c-1.98 0-3.6-1.62-3.6-3.6s1.62-3.6 3.6-3.6 3.6 1.62 3.6 3.6-1.62 3.6-3.6 3.6z"/></svg>
  <div class="a" style="left:762px;top:46px;width:4px;height:4px;border-radius:50%;background:#9aa0a6;box-shadow:0 7px 0 #9aa0a6,0 14px 0 #9aa0a6"></div>
  <!-- filter row -->
  <div class="a" style="left:0;top:70px;width:779px;height:1px;background:#494c50"></div>
  <div class="a" style="left:0;top:71px;width:779px;height:33px;background:#292a2d"></div>
  <div class="a" style="left:0;top:104px;width:779px;height:1px;background:#494c50"></div>
  <svg class="a" style="left:10px;top:79px" width="19" height="17" viewBox="0 0 19 17"><rect x="0.75" y="0.75" width="17.5" height="15.5" fill="none" stroke="#9aa0a6" stroke-width="1.5"/><rect x="4.5" y="1" width="1.5" height="15" fill="#9aa0a6"/><path d="M8.5 4 L14 8.5 L8.5 13Z" fill="#9aa0a6"/></svg>
  <svg class="a" style="left:47px;top:79px" width="18" height="18" viewBox="0 0 18 18"><circle cx="9" cy="9" r="7.3" fill="none" stroke="#9aa0a6" stroke-width="2"/><path d="M3.8 3.8 L14.2 14.2" stroke="#9aa0a6" stroke-width="2"/></svg>
  <div class="a" style="left:78px;top:76px;width:1px;height:22px;background:#494c50"></div>
  <div class="a nw" style="left:90px;top:79px;font-size:15px;line-height:16px;color:#e8eaed">appservice (#14)</div>
  <svg class="a" style="left:241px;top:83px" width="10" height="9" viewBox="0 0 10 9"><path d="M0.5 0.5 L9.5 0.5 L5 8.5Z" fill="#9aa0a6"/></svg>
  <div class="a" style="left:261px;top:76px;width:1px;height:22px;background:#494c50"></div>
  <svg class="a" style="left:275px;top:80px" width="21" height="14" viewBox="0 0 21 14"><path d="M10.5 1 C5.5 1 2 4.5 0.7 7 C2 9.5 5.5 13 10.5 13 C15.5 13 19 9.5 20.3 7 C19 4.5 15.5 1 10.5 1Z" fill="#9aa0a6"/><circle cx="10.5" cy="7" r="4" fill="#292a2d"/><circle cx="10.5" cy="7" r="2.4" fill="#9aa0a6"/></svg>
  <div class="a" style="left:309px;top:76px;width:1px;height:22px;background:#494c50"></div>
  <div class="a" style="left:317px;top:74px;width:172px;height:26px;border:1px solid #5f6368;background:#202124"></div>
  <div class="a nw" style="left:323px;top:79px;font-size:15px;line-height:16px;color:#e8eaed">Filter</div>
  <div class="a nw" style="left:499px;top:79px;font-size:15px;line-height:16px;color:#e8eaed">Default levels</div>
  <svg class="a" style="left:594px;top:83px" width="10" height="9" viewBox="0 0 10 9"><path d="M0.5 0.5 L9.5 0.5 L5 8.5Z" fill="#9aa0a6"/></svg>
  <div class="a" style="left:703px;top:77px;width:1px;height:20px;background:#494c50"></div>
  <div class="a nw" style="left:715px;top:79px;font-size:15.5px;line-height:16px;color:#9aa0a6">2 hidden</div>
  <div class="a" style="left:0;top:105px;width:779px;height:349px;background:#242424;overflow:hidden"><div class="a pre mono ct" style="left:30px;top:-10px">openid empty</div><div class="a pre mono ct" style="right:14px;top:-10px"><span style="text-decoration:underline">WAServiceMainContext.js:2</span></div><div class="a" style="left:0;top:9px;width:779px;height:26px;background:#332b00;border-top:1px solid #665500;border-bottom:1px solid #665500"></div><svg class="a" style="left:9px;top:15px" width="13" height="12" viewBox="0 0 13 12"><path d="M6.5 0.8 L12.4 11.3 L0.6 11.3Z" fill="#f7b500" stroke="#f7b500" stroke-width="1.2" stroke-linejoin="round"/><rect x="5.8" y="3.6" width="1.5" height="4.4" fill="#fff"/><rect x="5.8" y="8.8" width="1.5" height="1.5" fill="#fff"/></svg><div class="a pre mono ct" style="left:30px;top:15px">[sitemap <span class="cj">索引情况提示</span>] <span class="cj">根据</span> sitemap <span class="cj">的规则</span>[0]<span class="cj">，当前页面</span> [pages/favorite/favorite] <span class="cj">将被索引</span></div><div class="a" style="left:0;top:34px;width:779px;height:63px;background:#332b00;border-top:1px solid #665500;border-bottom:1px solid #665500"></div><svg class="a" style="left:9px;top:42px" width="13" height="12" viewBox="0 0 13 12"><path d="M6.5 0.8 L12.4 11.3 L0.6 11.3Z" fill="#f7b500" stroke="#f7b500" stroke-width="1.2" stroke-linejoin="round"/><rect x="5.8" y="3.6" width="1.5" height="4.4" fill="#fff"/><rect x="5.8" y="8.8" width="1.5" height="1.5" fill="#fff"/></svg><svg class="a" style="left:32px;top:43px" width="7" height="9" viewBox="0 0 7 9"><path d="M0.5 0.5 L6.5 4.5 L0.5 8.5Z" fill="#9a9a9a"/></svg><div class="a pre mono ct" style="right:14px;top:41px"><span style="text-decoration:underline">WAServiceMainContext.js:2</span></div><div class="a pre mono ct" style="left:30px;top:59px">WXMLRT_$gwx:./pages/favorite/favorite.wxml:simpleArcItem:10:18: wx:key="{{index}}" does</div><div class="a pre mono ct" style="left:30px;top:77px">not look like a valid key name (did you mean wx:key="index" ?)</div><div class="a" style="left:0;top:96px;width:779px;height:44px;background:#332b00;border-top:1px solid #665500;border-bottom:1px solid #665500"></div><svg class="a" style="left:9px;top:104px" width="13" height="12" viewBox="0 0 13 12"><path d="M6.5 0.8 L12.4 11.3 L0.6 11.3Z" fill="#f7b500" stroke="#f7b500" stroke-width="1.2" stroke-linejoin="round"/><rect x="5.8" y="3.6" width="1.5" height="4.4" fill="#fff"/><rect x="5.8" y="8.8" width="1.5" height="1.5" fill="#fff"/></svg><div class="a pre mono ct" style="left:30px;top:103px">[pages/favorite/favorite] Some selectors are not allowed in component wxss, including tag</div><div class="a pre mono ct" style="left:30px;top:121px">name selectors, ID selectors, and attribute selectors.(.<span style="text-decoration:underline">/custom-tab-bar/index.wxss:49</span>:15)</div><div class="a" style="left:0;top:139px;width:779px;height:206px;background:#332b00;border-top:1px solid #665500;border-bottom:1px solid #665500"></div><svg class="a" style="left:9px;top:147px" width="13" height="12" viewBox="0 0 13 12"><path d="M6.5 0.8 L12.4 11.3 L0.6 11.3Z" fill="#f7b500" stroke="#f7b500" stroke-width="1.2" stroke-linejoin="round"/><rect x="5.8" y="3.6" width="1.5" height="4.4" fill="#fff"/><rect x="5.8" y="8.8" width="1.5" height="1.5" fill="#fff"/></svg><div class="a pre mono ct" style="left:30px;top:146px">[WXML Runtime warning] ./pages/favorite/favorite.wxml</div><div class="a pre mono ct" style="left:30px;top:164px"> wx:key="{{index}}" does not look like a valid key name (did you mean wx:key="index" ?)</div><div class="a pre mono ct" style="left:30px;top:182px">   8 |         &lt;view class="content"&gt;</div><div class="a pre mono ct" style="left:30px;top:200px">   9 |             &lt;view class="user_box_fav_conainer"&gt;</div><div class="a pre mono ct" style="left:30px;top:218px">&gt; 10 |                 &lt;simpleArcItem anum="{{item.anum}}" bind:readArticle="readArticle"</div><div class="a pre mono ct" style="left:30px;top:236px">collectTime="{{item.collectTime}}" id="{{item.id}}" image="{{item.image}}" title="</div><div class="a pre mono ct" style="left:30px;top:254px">{{item.title}}" wx:for="{{clist}}" wx:key="{{index}}"&gt;&lt;/simpleArcItem&gt;</div><div class="a pre mono ct" style="left:30px;top:272px">     |                  ^</div><div class="a pre mono ct" style="left:30px;top:290px">  11 |             &lt;/view&gt;</div><div class="a pre mono ct" style="left:30px;top:308px">  12 |         &lt;/view&gt;</div><div class="a pre mono ct" style="left:30px;top:326px">  13 |         &lt;view class="pages" wx:if="{{total&gt;10}}"&gt;</div></div>
</div>
<div class="a" style="left:747px;top:0;width:1px;height:780px;background:#272727"></div>
<svg class="a" style="left:655px;top:22px" width="215" height="92" viewBox="0 0 215 92">
  <defs>
    <radialGradient id="gg" cx="0.45" cy="0.35" r="0.7"><stop offset="0" stop-color="#b09a34"/><stop offset="1" stop-color="#a08228"/></radialGradient>
  </defs>
  <ellipse cx="37.5" cy="48" rx="29.5" ry="40" fill="url(#gg)" opacity="0.95"/>
  <path d="M37 10 Q18 22 24 40 Q30 50 45 52 Q62 56 60 75 Q58 84 52 88 Q68 74 66 58 Q62 44 46 42 Q32 40 30 28 Q29 18 37 10Z" fill="#3a3a36"/>
  <path d="M12 44 Q22 52 40 50 Q58 48 66 58 Q58 50 42 53 Q24 56 12 44Z" fill="#c04a2a" opacity="0.8"/>
  <text x="77" y="55" font-family="Liberation Sans" font-size="53" fill="#a0532a" textLength="45" lengthAdjust="spacingAndGlyphs">K1</text>
  <text x="130" y="58" font-family="Liberation Sans" font-size="50" font-weight="bold" fill="#1f6e1f" textLength="38" lengthAdjust="spacingAndGlyphs">源</text>
  <text x="171" y="58" font-family="Liberation Sans" font-size="50" font-weight="bold" fill="#a0532a" textLength="38" lengthAdjust="spacingAndGlyphs">码</text>
  <path d="M127 24 L128 14 L132 19 L135 10 L138 19 L142 14 L143 24Z" fill="#1f6e1f"/>
  <text x="76" y="82" font-family="Liberation Mono" font-size="17" letter-spacing="7.3" fill="#1c7a1c">k1ym.com</text>
</svg>
</body></html>
